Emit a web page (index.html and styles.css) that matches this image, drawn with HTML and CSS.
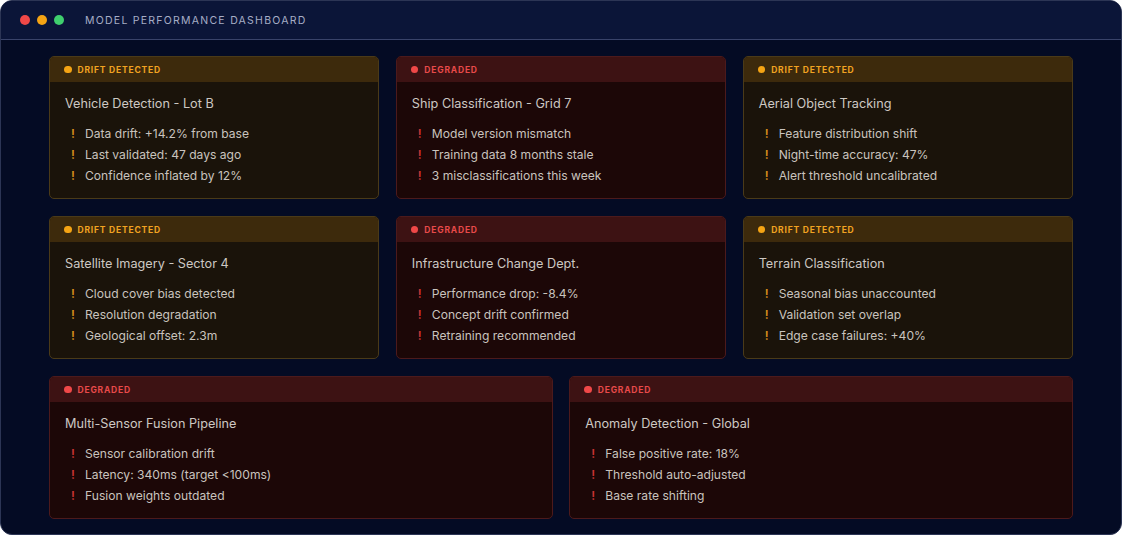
FILE: index.html
```html
<!DOCTYPE html>
<html lang="en">
<head>
    <meta charset="UTF-8">
    <meta name="viewport" content="width=device-width, initial-scale=1.0">
    <title>Model Performance Dashboard</title>
    <link rel="stylesheet" href="styles.css">
</head>
<body>

    <div class="window">
        <div class="titlebar">
            <span class="dot red"></span>
            <span class="dot amber"></span>
            <span class="dot green"></span>
            <span class="title">Model Performance Dashboard</span>
        </div>

        <div class="grid">
            <div class="card drift third">
                <div class="card-head"><span class="status-dot"></span>Drift Detected</div>
                <div class="card-body">
                    <h2>Vehicle Detection - Lot B</h2>
                    <ul>
                        <li>Data drift: +14.2% from base</li>
                        <li>Last validated: 47 days ago</li>
                        <li>Confidence inflated by 12%</li>
                    </ul>
                </div>
            </div>

            <div class="card degraded third">
                <div class="card-head"><span class="status-dot"></span>Degraded</div>
                <div class="card-body">
                    <h2>Ship Classification - Grid 7</h2>
                    <ul>
                        <li>Model version mismatch</li>
                        <li>Training data 8 months stale</li>
                        <li>3 misclassifications this week</li>
                    </ul>
                </div>
            </div>

            <div class="card drift third">
                <div class="card-head"><span class="status-dot"></span>Drift Detected</div>
                <div class="card-body">
                    <h2>Aerial Object Tracking</h2>
                    <ul>
                        <li>Feature distribution shift</li>
                        <li>Night-time accuracy: 47%</li>
                        <li>Alert threshold uncalibrated</li>
                    </ul>
                </div>
            </div>

            <div class="card drift third">
                <div class="card-head"><span class="status-dot"></span>Drift Detected</div>
                <div class="card-body">
                    <h2>Satellite Imagery - Sector 4</h2>
                    <ul>
                        <li>Cloud cover bias detected</li>
                        <li>Resolution degradation</li>
                        <li>Geological offset: 2.3m</li>
                    </ul>
                </div>
            </div>

            <div class="card degraded third">
                <div class="card-head"><span class="status-dot"></span>Degraded</div>
                <div class="card-body">
                    <h2>Infrastructure Change Dept.</h2>
                    <ul>
                        <li>Performance drop: -8.4%</li>
                        <li>Concept drift confirmed</li>
                        <li>Retraining recommended</li>
                    </ul>
                </div>
            </div>

            <div class="card drift third">
                <div class="card-head"><span class="status-dot"></span>Drift Detected</div>
                <div class="card-body">
                    <h2>Terrain Classification</h2>
                    <ul>
                        <li>Seasonal bias unaccounted</li>
                        <li>Validation set overlap</li>
                        <li>Edge case failures: +40%</li>
                    </ul>
                </div>
            </div>

            <div class="card degraded half">
                <div class="card-head"><span class="status-dot"></span>Degraded</div>
                <div class="card-body">
                    <h2>Multi-Sensor Fusion Pipeline</h2>
                    <ul>
                        <li>Sensor calibration drift</li>
                        <li>Latency: 340ms (target &lt;100ms)</li>
                        <li>Fusion weights outdated</li>
                    </ul>
                </div>
            </div>

            <div class="card degraded half">
                <div class="card-head"><span class="status-dot"></span>Degraded</div>
                <div class="card-body">
                    <h2>Anomaly Detection - Global</h2>
                    <ul>
                        <li>False positive rate: 18%</li>
                        <li>Threshold auto-adjusted</li>
                        <li>Base rate shifting</li>
                    </ul>
                </div>
            </div>
        </div>
    </div>

</body>
</html>
```

FILE: styles.css
```css
body {
    font-family: 'Inter', 'Noto Sans', sans-serif;
    background-color: #ffffff;
    margin: 0;
    padding: 0;
}

.window {
    width: 1122px;
    height: 535px;
    box-sizing: border-box;
    background-color: #040b24;
    border: 1px solid #2c3555;
    border-radius: 12px;
    overflow: hidden;
}

.titlebar {
    height: 38px;
    display: flex;
    align-items: center;
    padding-left: 19px;
    background-color: #0b1538;
    border-bottom: 1px solid #39436a;
}

.dot {
    width: 10px;
    height: 10px;
    border-radius: 50%;
    margin-right: 7px;
}

.dot.red { background-color: #f04848; }
.dot.amber { background-color: #f5a414; }
.dot.green { background-color: #3fcf6e; }

.title {
    margin-left: 14px;
    font-size: 10.5px;
    letter-spacing: 1.25px;
    text-transform: uppercase;
    color: #a6adc6;
}

.grid {
    display: grid;
    grid-template-columns: repeat(6, 1fr);
    grid-auto-rows: 143px;
    column-gap: 16.5px;
    row-gap: 17px;
    padding: 16px 48px 0 48px;
}

.third { grid-column: span 2; }
.half { grid-column: span 3; }

.card {
    display: flex;
    flex-direction: column;
    border-radius: 5px;
    border: 1px solid;
    overflow: hidden;
}

.card-head {
    height: 25px;
    display: flex;
    align-items: center;
    padding-left: 14px;
    font-size: 8.5px;
    font-weight: 700;
    letter-spacing: 0.8px;
    text-transform: uppercase;
}

.status-dot {
    width: 7.5px;
    height: 7.5px;
    border-radius: 50%;
    margin-right: 6px;
}

.card-body {
    flex: 1;
    padding: 14px 15px 0 15px;
}

h2 {
    margin: 0 0 12px 0;
    font-size: 12.7px;
    font-weight: 400;
    color: #cdc8c3;
}

ul {
    list-style: none;
    margin: 0;
    padding: 0 0 0 6px;
}

li {
    position: relative;
    padding-left: 14px;
    font-size: 12.1px;
    line-height: 21px;
    color: #c9c3be;
}

li::before {
    content: "!";
    position: absolute;
    left: 0;
    font-weight: 600;
}

/* drift detected */
.card.drift {
    border-color: #4a3a18;
    background-color: #1a130a;
}

.drift .card-head {
    background-color: #3d2a0c;
    color: #f1a321;
}

.drift .status-dot { background-color: #f5a414; }
.drift li::before { color: #d68d1c; }

/* degraded */
.card.degraded {
    border-color: #4c1a1c;
    background-color: #1c0707;
}

.degraded .card-head {
    background-color: #3d1213;
    color: #e84a4a;
}

.degraded .status-dot { background-color: #f04848; }
.degraded li::before { color: #c93434; }
```
